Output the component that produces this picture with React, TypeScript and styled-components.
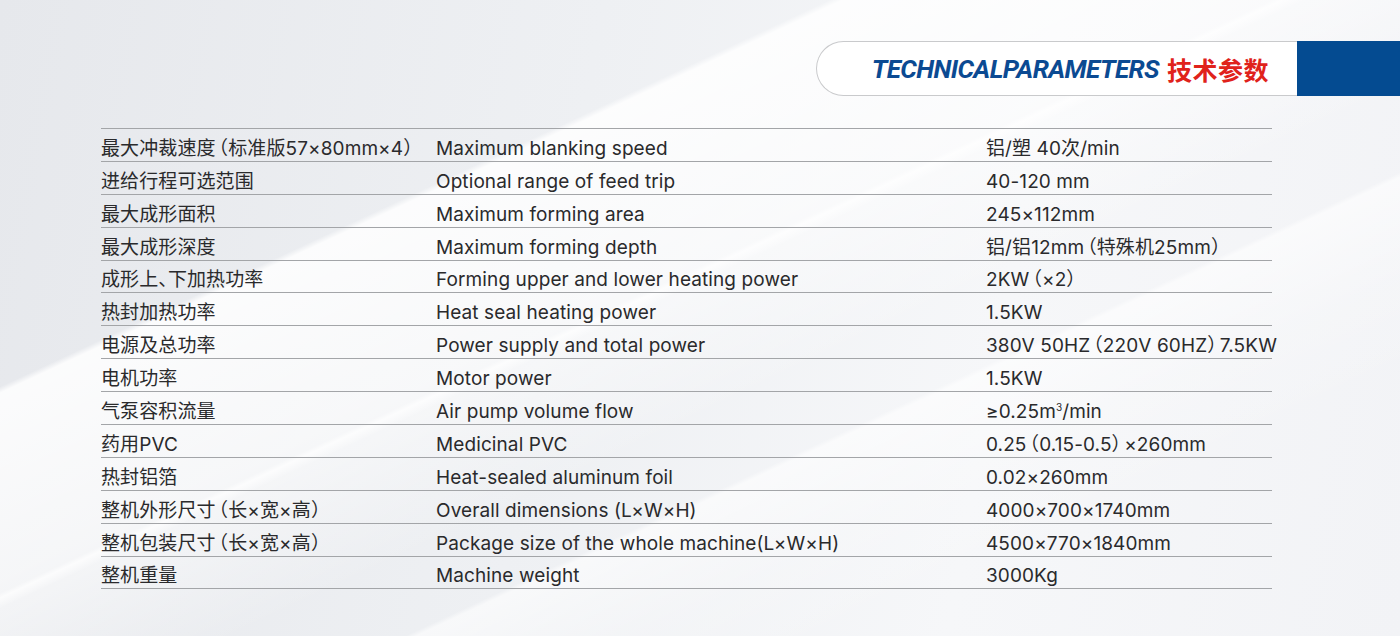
import React from "react";
import styled, { createGlobalStyle } from "styled-components";

const GlobalStyle = createGlobalStyle`
  html, body { margin: 0; padding: 0; }
  body {
    width: 1400px;
    height: 636px;
    overflow: hidden;
    font-family: "Inter", "Noto Sans CJK SC", sans-serif;
  }
`;

const Page = styled.div`
  position: relative;
  width: 1400px;
  height: 636px;
  overflow: hidden;
  background:
    linear-gradient(155deg,
      rgba(255,255,255,0) 0%,
      rgba(255,255,255,0) 30%,
      rgba(255,255,255,0.85) 30.5%,
      rgba(255,255,255,0.6) 45%,
      rgba(255,255,255,0) 58%,
      rgba(255,255,255,0) 100%),
    linear-gradient(155deg,
      rgba(255,255,255,0) 0%,
      rgba(255,255,255,0) 46%,
      rgba(255,255,255,0.7) 46.4%,
      rgba(255,255,255,0) 47.2%,
      rgba(255,255,255,0) 64%,
      rgba(255,255,255,0.6) 64.4%,
      rgba(255,255,255,0.2) 72%,
      rgba(255,255,255,0) 80%),
    linear-gradient(100deg, #e6e8ec 0%, #eef0f3 40%, #f6f7f9 70%, #f2f3f6 100%);
  display: flex;
  flex-direction: column;
`;

const HeaderRow = styled.div`
  display: flex;
  justify-content: flex-end;
  margin-top: 41px;
`;

const Pill = styled.div`
  width: 481px;
  height: 55px;
  box-sizing: border-box;
  background: #ffffff;
  border: 1.5px solid #c9cacc;
  border-right: none;
  border-radius: 28px 0 0 28px;
  display: flex;
  align-items: center;
  justify-content: flex-end;
  padding-right: 28px;
  gap: 8px;
`;

const TitleEn = styled.span`
  font-family: "Roboto", "Liberation Sans", sans-serif;
  font-style: italic;
  font-weight: 700;
  font-size: 26px;
  letter-spacing: -0.6px;
  color: #0b4a92;
`;

const TitleZh = styled.span`
  font-family: "Noto Sans CJK SC", sans-serif;
  font-weight: 700;
  font-size: 25px;
  letter-spacing: 0.5px;
  color: #e0221b;
`;

const BlueBlock = styled.div`
  width: 103px;
  height: 55px;
  background: #044b91;
`;

const Table = styled.div`
  margin: 32px 0 0 101px;
  width: 1171px;
  border-top: 1px solid #a3a5a8;
`;

const Row = styled.div`
  display: grid;
  grid-template-columns: 335px 550px 1fr;
  height: 32.9px;
  box-sizing: border-box;
  border-bottom: 1px solid #a3a5a8;
  align-items: end;
`;

const Cell = styled.div`
  font-size: 19px;
  line-height: 24px;
  padding-bottom: 0;
  color: #2a2a2c;
  letter-spacing: 0.1px;
  white-space: nowrap;
`;

const Paren = styled.span<{ $side: "open" | "close" | "mid" }>`
  font-family: "Noto Sans CJK SC", sans-serif;
  font-feature-settings: "halt";
  margin-left: ${(p) => (p.$side === "open" ? "3px" : "0")};
  margin-right: ${(p) => (p.$side === "close" ? "3px" : "0")};
`;

const Sup = styled.sup`
  font-size: 10px;
  vertical-align: top;
  line-height: 14px;
`;

const O = () => <Paren $side="open">（</Paren>;
const C = () => <Paren $side="close">）</Paren>;
const Comma = () => <Paren $side="mid">、</Paren>;

const rows: [React.ReactNode, string, React.ReactNode][] = [
  [<>最大冲裁速度<O />标准版57×80mm×4<C /></>, "Maximum blanking speed", "铝/塑 40次/min"],
  ["进给行程可选范围", "Optional range of feed trip", "40-120 mm"],
  ["最大成形面积", "Maximum forming area", "245×112mm"],
  ["最大成形深度", "Maximum forming depth", <>铝/铝12mm<O />特殊机25mm<C /></>],
  [<>成形上<Comma />下加热功率</>, "Forming upper and lower heating power", <>2KW<O />×2<C /></>],
  ["热封加热功率", "Heat seal heating power", "1.5KW"],
  ["电源及总功率", "Power supply and total power", <>380V 50HZ<O />220V 60HZ<C />7.5KW</>],
  ["电机功率", "Motor power", "1.5KW"],
  ["气泵容积流量", "Air pump volume flow", <>≥0.25m<Sup>3</Sup>/min</>],
  ["药用PVC", "Medicinal PVC", <>0.25<O />0.15-0.5<C />×260mm</>],
  ["热封铝箔", "Heat-sealed aluminum foil", "0.02×260mm"],
  [<>整机外形尺寸<O />长×宽×高<C /></>, "Overall dimensions (L×W×H)", "4000×700×1740mm"],
  [<>整机包装尺寸<O />长×宽×高<C /></>, "Package size of the whole machine(L×W×H)", "4500×770×1840mm"],
  ["整机重量", "Machine weight", "3000Kg"],
];

export default function App() {
  return (
    <>
      <GlobalStyle />
      <Page>
        <HeaderRow>
          <Pill>
            <TitleEn>TECHNICALPARAMETERS</TitleEn>
            <TitleZh>技术参数</TitleZh>
          </Pill>
          <BlueBlock />
        </HeaderRow>
        <Table>
          {rows.map(([zh, en, val], i) => (
            <Row key={i}>
              <Cell>{zh}</Cell>
              <Cell>{en}</Cell>
              <Cell>{val}</Cell>
            </Row>
          ))}
        </Table>
      </Page>
    </>
  );
}
